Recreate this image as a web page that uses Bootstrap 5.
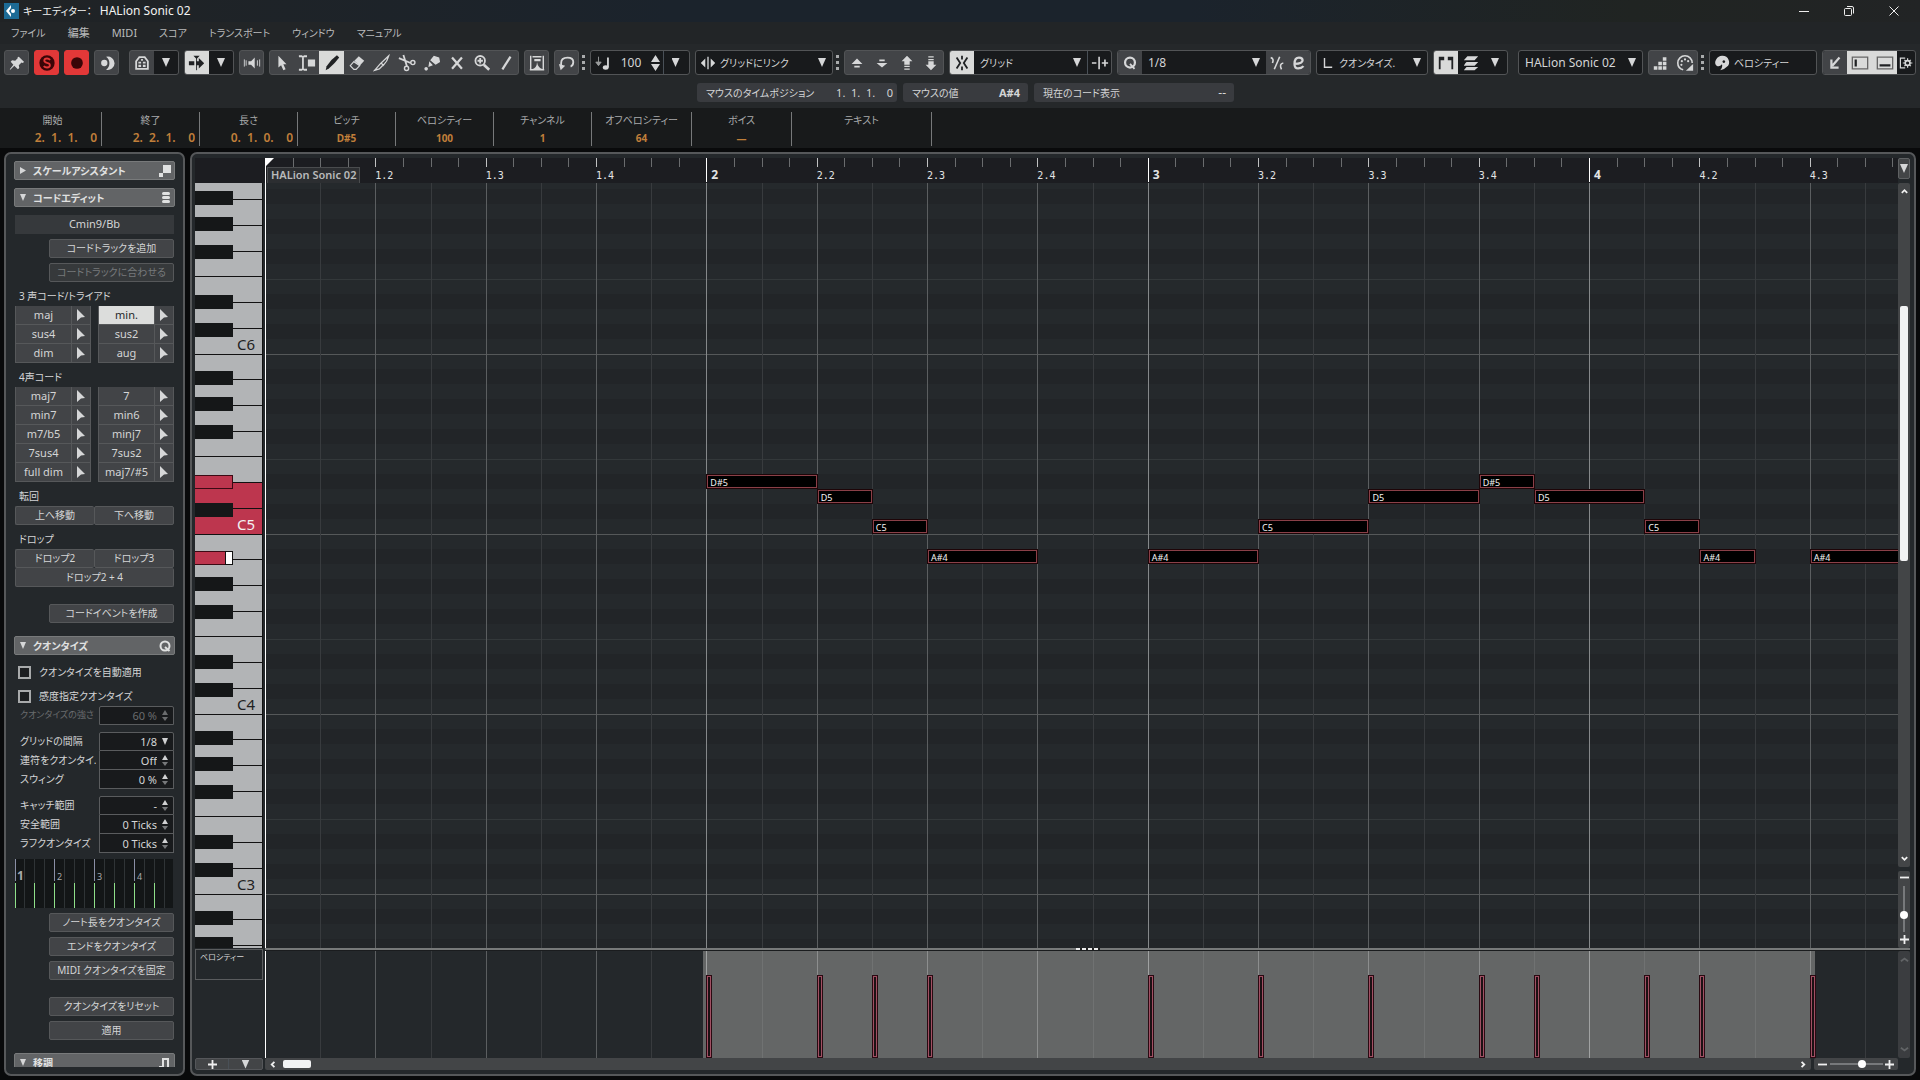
<!DOCTYPE html>
<html lang="ja" data-bs-theme="dark">
<head>
<meta charset="utf-8">
<meta name="viewport" content="width=device-width, initial-scale=1">
<title>キーエディター： HALion Sonic 02</title>
<link rel="stylesheet" href="https://cdn.jsdelivr.net/npm/bootstrap@5.3.0/dist/css/bootstrap.min.css">
<style>
:root{--ink:#d4d5d6;--field:#181a1c;--btn:#424447;--line:#5a5c5e;--panel:#24282b}
body{background:#090a0b;color:var(--ink);font-family:"Noto Sans","Noto Sans CJK JP",sans-serif;font-size:12px;line-height:16px;font-feature-settings:"palt"}
.jp{font-size:10px}
button,input,select{font:inherit;color:inherit;padding:0;margin:0;border:0;background:none;border-radius:0;min-width:0;font-feature-settings:inherit}
svg{display:block;flex:none}
.ic{width:18px;height:18px;fill:#d6d7d8;stroke:none}
.ln{fill:none;stroke:#d6d7d8;stroke-width:2}
.titlebar{height:22px;background:linear-gradient(90deg,#202325,#1b232c 35%,#1b232c 62%,#202422 85%,#222425);color:#f2f2f2}
.winbtns{gap:29px;padding-right:18px}
.menubar{height:22px;background:#222527;padding-left:11px;gap:22px;font-size:11px}
.menubar a{color:#b9babb;text-decoration:none}
.tools{background:#25282a;height:64px;padding-top:6px}
.toolrow{height:25px;padding:0 4px;gap:5px}
.grp{display:flex;height:25px;border:1px solid #525456;border-radius:3px;background:var(--btn);overflow:hidden;align-items:stretch;flex:none}
.grp>*{display:flex;align-items:center;justify-content:center}
.grp.fld,.grp .fld{background:var(--field)}
.grp .on{background:#d9dad9}
.grp .on .ic{fill:#202224}
.grp.red{background:#e23838;border-color:#e23838}
.grp .lit{background:var(--btn)}
.more{margin-left:5px}
.cell{width:25px;flex:none}
.grp>.cell:first-child,.grp>.cell:last-child{width:24px}
.solo{width:25px}.solo>button{width:100%}
.tri{width:8px;height:9px;background:#d6d7d8;clip-path:polygon(0 0,100% 0,50% 100%);flex:none}
.sel{position:relative;flex:1;min-width:0}
.sel select{appearance:none;width:100%;height:100%;padding:0 20px 0 6px;outline:0}
.sel .tri{position:absolute;right:6px;top:7px;pointer-events:none}
.dots{width:3px;height:15px;background:repeating-linear-gradient(#a9abac 0 3px,transparent 3px 6px);align-self:center;flex:none;margin-left:-2px}
.status{height:19px;gap:6px;margin-top:8px;padding-left:697px}
.status>div{background:#393b3f;border-radius:3px;height:19px;padding:0 4px 0 9px}
.info{height:40px;background:#181a1b;padding:4px 0 2px 4px}
.icell{border-right:1px solid #77797a;text-align:center;height:34px;flex:none}
.icell>*{display:block;height:17px;line-height:16px;color:#a9aaab}
.icell>input{width:100%;color:#c07f3a;font-size:10px;font-weight:700;text-align:center;line-height:18px}
.icell.tm>input{font-size:12px;font-weight:600;text-align:right;white-space:pre;padding-right:4px}
.w98{width:98px}.w100{width:100px}.w140{width:140px}
.main{padding:4px;gap:5px}
.pane{border:2px solid #56585a;border-radius:7px;background:var(--panel);min-height:0}
.side{width:181px;padding:7px 8px;flex:none}
.hd{width:100%;height:19px;flex:none;background:#626466;border:1px solid #787a7b;border-radius:2px;font-weight:700;color:#e0e1e1;padding:0 3px 0 5px;gap:7px}
.hd .tri{width:6px;height:7px}
.hd .tri.r{clip-path:polygon(0 0,100% 50%,0 100%)}
.b{height:19px;background:var(--btn);border:1px solid #56585a;border-radius:2px;width:125px;line-height:15px;flex:none}
.b:disabled{color:#77797b;background:#36393b}
.lbl{height:24px;padding:6px 0 0 5px;flex:none}
.blk{margin:0 1px;flex:none}
.chord{display:grid;grid-template-columns:57px 19px 7px 57px 19px;font-size:11px}
.chord button{height:19px;background:var(--btn);border:1px solid #56585a;border-left-width:0;border-top-width:0;line-height:15px;padding-bottom:2px;display:flex;align-items:center;justify-content:center}
.chord button.nm{border-left-width:1px}
.chord button.on{background:#dcdddc;color:#26282a}
.chord svg{width:10px;height:13px;fill:#d6d7d8}
.half>button{flex:1}
.q{display:grid;grid-template-columns:84px 75px}
.q label{padding-left:5px;height:19px;line-height:18px;white-space:nowrap}
.q .box{display:flex;align-items:center;gap:5px;height:19px;border:1px solid var(--line);border-top-width:0;background:var(--field);padding-right:5px;font-size:11px}
.q .box.t{border-top-width:1px;border-radius:2px 2px 0 0}
.q .box input,.q .box select{width:100%;text-align:right;text-align-last:right;appearance:none;outline:0;height:17px}
.q .dim,.q .dim input{color:#6a6c6e}
.q label.dim{font-size:9px}
.sp{width:6px;height:13px;fill:#d0d1d2}
.chk{height:24px;gap:8px;padding-left:3px;flex:none}
.chk input{appearance:none;width:13px;height:13px;border:2px solid #a8aaab;background:#1c1e20}
.ed{display:grid;grid-template:25px 1fr 3px 107px 12px / 70px 1fr 12px;padding:4px 4px 4px 3px;min-width:0}
.ruler{background:#1c1d21;position:relative;overflow:hidden}
.keys{position:relative;overflow:hidden;background:#b2b4b6;width:68px;border-right:1px solid #111}
.keys>*{position:absolute}
.wl{left:0;right:0;height:1px;background:#111}
.bk{left:0;width:38px;height:14px;background:#151718}
.rk{left:0;right:0;background:#bd364e}
.bk.red{background:#bd364e;border:1px solid #3c0a14;border-left:0}
.kn{right:7px;font-size:15px;line-height:18px;color:#222}
.roll{position:relative;overflow:hidden;background:#25292c}
.roll>*,.ruler>*,.lane>*{position:absolute}
.row-dark{left:0;right:0;height:15px;background:#222528}
.hl{left:0;right:0;height:1px}
.vl{top:0;bottom:0;width:1px}
.note{height:15px;border:1px solid #1d0508;background:#000;outline:1px solid #8a4048;outline-offset:-2px;color:#f4f4f4;font-size:9px;line-height:15px;padding-left:3px;overflow:hidden}
.lane{position:relative;overflow:hidden;background:#24282b}
.selband{top:0;bottom:0;background:#646666}
.vel{width:6px;background:#1c1114;border:1px solid #2a0a12;outline:1px solid #a05063;outline-offset:-2px}
.num{font-family:"DejaVu Sans Mono",monospace;font-size:10px;line-height:12px;top:12px;color:#e3e4e4}
.num.bar{font-family:"Noto Sans",sans-serif;font-weight:700;font-size:12px;top:11px}
.tick{top:0;width:1px;background:#6a6c6e;height:9px}
.part{left:2px;top:9px;height:16px;background:#2c2e31;border:1px solid #4a4c4e;border-bottom:0;font-size:11px;line-height:14px;font-weight:600;padding:0 3px;color:#b9babb}
.play{top:0;bottom:0;left:0;width:1px;background:#fff}
.flag{left:0;top:0;width:9px;height:9px;background:#fff;clip-path:polygon(0 0,100% 0,0 100%)}
.split{background:linear-gradient(#777979 0 2px,#1a1c1e 2px);position:relative;grid-column:2/4}
.grip{position:absolute;left:50%;top:0;width:24px;height:2px;margin-left:-12px;background:repeating-linear-gradient(90deg,#eee 0 4px,#222 4px 6px)}
.sb{background:#434547;border-radius:2px}
.rmenu{border:1px solid #5f6163}
.thumb{background:#f2f3f4;border-radius:2px}
.vthumb{position:absolute;left:2px;right:2px;top:123px;height:255px}
.hthumb{width:28px;height:8px;margin-left:5px}
.vbox{border:1px solid #5a5c5e;height:31px;width:68px;margin-top:-2px;font-size:8px;line-height:14px;padding-left:4px;background:#24282b;position:relative}
input[type=range]{appearance:none;height:10px;background:linear-gradient(#77797b,#77797b) center/100% 2px no-repeat}
input[type=range]::-webkit-slider-thumb{appearance:none;width:8px;height:8px;border-radius:50%;background:#fff}
.zoomv{width:46px;transform:rotate(90deg);flex:none}
.zoomvbox{height:46px;width:12px}
.zoomh{width:53px}
.mini{width:9px;height:9px;fill:none;stroke:#f0f0f0;stroke-width:2}
.mini.off{stroke:#77797b}
</style>
<script src="https://cdn.jsdelivr.net/npm/bootstrap@5.3.0/dist/js/bootstrap.bundle.min.js"></script>
</head>
<body class="vh-100 d-flex flex-column overflow-hidden">
<header class="titlebar d-flex align-items-center flex-shrink-0 ps-1">
  <svg width="15" height="16" viewBox="0 0 15 16"><rect width="15" height="16" fill="#1d6b96"/><path d="M7 2 2 8l5 6V11L5 8l2-3z" fill="#fff"/><circle cx="9" cy="8" r="2" fill="#fff"/></svg>
  <span class="ms-1 me-auto d-flex gap-2"><span class="jp">キーエディター：</span><span>HALion Sonic 02</span></span>
  <div class="winbtns d-flex">
    <button aria-label="最小化"><svg width="16" height="16" viewBox="0 0 16 16" stroke="#eee" fill="none"><path d="M3 8.5h10"/></svg></button>
    <button aria-label="元に戻す"><svg width="16" height="16" viewBox="0 0 16 16" stroke="#eee" fill="none"><rect x="3.5" y="5.5" width="7" height="7" rx="1"/><path d="M6 3.5h5q1.500 0 1.500 1.500v5.500"/></svg></button>
    <button aria-label="閉じる"><svg width="16" height="16" viewBox="0 0 16 16" stroke="#eee" fill="none"><path d="M3.500 3.500l9 9m0-9l-9 9"/></svg></button>
  </div>
</header>
<nav class="menubar d-flex align-items-center flex-shrink-0">
  <a class="jp" href="#">ファイル</a><a href="#">編集</a><a href="#">MIDI</a><a class="jp" href="#">スコア</a><a class="jp" href="#">トランスポート</a><a class="jp" href="#">ウィンドウ</a><a class="jp" href="#">マニュアル</a>
</nav>
<div class="tools flex-shrink-0">
  <div class="toolrow d-flex">
    <div class="grp solo"><button aria-label="ピン"><svg class="ic" viewBox="0 0 20 20"><path d="M12 3l6 6-2 1-1-.5-3 3 .5 3L11 17l-4-4-4.500 4.500-.500-.500L6 12 3 8.500 4.500 7l3.500.5 3-3L10.500 3.500z"/></svg></button></div>
    <div class="grp solo red"><button aria-label="ソロ"><svg class="ic" viewBox="0 0 20 20"><circle cx="10" cy="10" r="8.500" style="fill:#3a0507"/><path d="M13.500 6.500Q12 5 10 5 7 5 7 7.300q0 2 3 2.500 3.200.5 3.200 2.700Q13.200 15 10 15q-2.200 0-3.700-1.500" fill="none" stroke="#e23838" stroke-width="2"/></svg></button></div>
    <div class="grp solo red"><button aria-label="録音"><svg class="ic" viewBox="0 0 20 20"><circle cx="10" cy="10" r="6.500" style="fill:#3a0507"/></svg></button></div>
    <div class="grp solo"><button aria-label="レトロスペクティブ録音"><svg class="ic" viewBox="0 0 20 20"><path d="M9 3a7.500 7.500 0 1 1 0 14.500A9 9 0 0 0 9 3z"/><circle cx="7" cy="10" r="3.500"/></svg></button></div>
    <div class="grp more"><button class="cell" aria-label="表示"><svg class="ic" viewBox="0 0 20 20"><path class="ln" d="M3.500 16.500V8l3.500-4.500h6L16.500 8v8.500z"/><path d="M6 8.500h3v2H6zM11 8.500h3v2h-3zM6 12h3v2.500H6zM11 12h3v2.500h-3zM9 5.500h2v2H9z"/></svg></button><button class="cell fld" aria-label="表示メニュー"><i class="tri"></i></button></div>
    <div class="grp"><button class="cell on" aria-label="自動スクロール"><svg class="ic" viewBox="0 0 20 20"><path d="M1 8h6v4.500H1zM12 4.500l6 5.700-6 5.800v-3.500H9V8h3zM6 2h7L9.500 5.500z"/><path d="M9.500 4v14" stroke="#202224"/></svg></button><button class="cell fld" aria-label="自動スクロール設定"><i class="tri"></i></button></div>
    <div class="grp solo"><button aria-label="試聴"><svg class="ic" viewBox="0 0 20 20"><path d="M6 8h3l4-4v12l-4-4H6z"/><path d="M1.500 6v8M3.500 7v6M16 7v6M18.500 6v8" stroke="#d6d7d8"/></svg></button></div>
    <div class="grp">
      <button class="cell" aria-label="選択"><svg class="ic" viewBox="0 0 20 20"><path d="M6 2v13l3-2.500L11.500 18l2.500-1-2.500-5.500H15z"/></svg></button>
      <button class="cell" aria-label="トリム"><svg class="ic" viewBox="0 0 20 20"><path class="ln" d="M1 2.500h3l1.500 1 1.500-1h3M1 17.500h3l1.500-1 1.500 1h3M5.500 3v14"/><path d="M11 6h8v8h-8z"/></svg></button>
      <button class="cell on" aria-label="鉛筆"><svg class="ic" viewBox="0 0 20 20"><path d="M15.500 1.500l2.500 2.500Q13 11 6.500 16L3 18l1-4.500Q9 6 15.500 1.500z"/></svg></button>
      <button class="cell" aria-label="消しゴム"><svg class="ic" viewBox="0 0 20 20"><path d="M12 2.500l6 5-5 5.500-6-5.500z"/><path class="ln" d="M6.500 8.500L2.500 13l4 4H9l4-4z" style="stroke-width:1.300"/></svg></button>
      <button class="cell" aria-label="カット"><svg class="ic" viewBox="0 0 20 20"><path class="ln" d="M17.500 2L9 10l2.500 2.500Q16 8 17.500 2zM8.500 10.500L2 18l5-1.500 4-4" style="stroke-width:1.400"/></svg></button>
      <button class="cell" aria-label="はさみ"><svg class="ic" viewBox="0 0 20 20"><path class="ln" d="M1 4.500l13 5.500M6 1l4 13" style="stroke-width:2"/><circle class="ln" cx="9.500" cy="16" r="2.300" style="stroke-width:1.600"/><circle class="ln" cx="16.500" cy="9.500" r="2.300" style="stroke-width:1.600"/></svg></button>
      <button class="cell" aria-label="のり"><svg class="ic" viewBox="0 0 20 20"><path d="M12 2l6 2 1 5-5 3-6-5zM7 8l4 4.500-5 2z"/><circle cx="3.500" cy="16.500" r="2"/></svg></button>
      <button class="cell" aria-label="ミュート"><svg class="ic" viewBox="0 0 20 20"><path class="ln" d="M4.500 4l11 12.500m0-12.500l-11 12.500" style="stroke-width:2.500"/></svg></button>
      <button class="cell" aria-label="ズーム"><svg class="ic" viewBox="0 0 20 20"><circle class="ln" cx="8" cy="7.500" r="5.300"/><path class="ln" d="M8 4.500v6M5 7.500h6"/><path class="ln" d="M12 12l6 5.500" style="stroke-width:3"/></svg></button>
      <button class="cell" aria-label="ライン"><svg class="ic" viewBox="0 0 20 20"><path class="ln" d="M15 3L6 17" style="stroke-width:2.500"/></svg></button>
    </div>
    <div class="grp solo"><button aria-label="コントローラー"><svg class="ic" viewBox="0 0 20 20"><path class="ln" d="M3 2v15.500M17 2v15.500M2 17.500h16M5 3h10" style="stroke-width:1.600"/><path d="M7 5.500h7V8H7zM4 17q6-1 6-8 1 7 7 8z"/></svg></button></div>
    <div class="grp solo"><button aria-label="フィードバック"><svg class="ic" viewBox="0 0 20 20"><path class="ln" d="M3.500 15V10q0-6 7-6 6.500 0 6.500 5 0 4-3 5"/><path d="M1 11l2 7 5-5z"/></svg></button></div>
    <i class="dots"></i>
    <div class="grp fld" style="width:100px"><label class="cell" for="vel"><svg class="ic" viewBox="0 0 20 20"><path d="M5 3v8M2 9l3 4 3-4z" stroke="#9b9d9e" fill="#9b9d9e"/><path class="ln" d="M15.500 4v11"/><ellipse cx="13" cy="15" rx="3.200" ry="2.500"/></svg></label><input id="vel" class="text-center" style="width:32px" value="100"><button aria-label="増減" style="width:16px"><svg width="9" height="16" viewBox="0 0 9 16" fill="#d6d7d8"><path d="M0 7l4.500-7L9 7zM0 9h9l-4.500 7z"/></svg></button><button class="cell border-start" aria-label="ベロシティーメニュー"><i class="tri"></i></button></div>
    <div class="grp fld" style="width:138px"><span class="cell"><svg class="ic" viewBox="0 0 20 20"><path d="M7 5v10l-5-5zM13 5v10l5-5z"/><path d="M10 3v14" stroke="#d6d7d8" stroke-width="1.500"/></svg></span><div class="sel jp"><select aria-label="ノート長" class="ps-0"><option>グリッドにリンク</option></select><i class="tri"></i></div></div>
    <i class="dots"></i>
    <div class="grp">
      <button class="cell" aria-label="上へ"><svg class="ic" viewBox="0 0 20 20"><path d="M4 11l6-6 6 6zM7 13h6v2H7z"/></svg></button>
      <button class="cell" aria-label="下へ"><svg class="ic" viewBox="0 0 20 20"><path d="M4 10l6 5 6-5zM7 6h6v2H7z"/></svg></button>
      <button class="cell" aria-label="オクターブ上へ"><svg class="ic" viewBox="0 0 20 20"><path d="M4 8l6-6 6 6h-3v4H7V8zM7 13h6v1.500H7zM7 16h6v1.500H7z"/></svg></button>
      <button class="cell" aria-label="オクターブ下へ"><svg class="ic" viewBox="0 0 20 20"><path d="M4 12l6 6 6-6h-3V8H7v4zM7 5.500h6V7H7zM7 2.500h6V4H7z"/></svg></button>
    </div>
    <div class="grp fld" style="width:163px"><button class="cell on" aria-label="スナップ"><svg class="ic" viewBox="0 0 20 20"><path d="M10 2v4M10 14v4M4 4l4 6-4 6M16 4l-4 6 4 6" fill="none" stroke="#202224" stroke-width="2"/></svg></button><div class="sel jp"><select aria-label="スナップタイプ"><option>グリッド</option></select><i class="tri"></i></div><button class="cell border-start" aria-label="グリッド相対"><svg class="ic" viewBox="0 0 20 20"><path class="ln" d="M1 10h5M12 10h7M15.500 6v8M9 3v14" style="stroke-width:1.800"/></svg></button></div>
    <div class="grp fld" style="width:194px"><button class="cell lit" aria-label="クオンタイズ適用"><svg class="ic" viewBox="0 0 20 20"><circle class="ln" cx="10" cy="9.500" r="5.500" style="stroke-width:2.500"/><path class="ln" d="M10 11l5 5.500"/></svg></button><div class="sel"><select aria-label="クオンタイズ値"><option>1/8</option></select><i class="tri"></i></div><button class="lit" style="width:22px" aria-label="ソフトクオンタイズ"><svg class="ic" viewBox="0 0 20 20"><path class="ln" d="M13 3L7 17M3 4q4 1 2 6M17 10q-5 1-2 7" style="stroke-width:1.800"/></svg></button><button class="lit" style="width:22px" aria-label="クオンタイズパネル"><svg class="ic" viewBox="0 0 20 20"><path class="ln" d="M5 11q9 0 9-4 0-3-4-3-5 0-5 7 0 5 4 5 4 0 6-2.500" style="stroke-width:2.500"/></svg></button></div>
    <div class="grp fld" style="width:112px"><span class="ps-1"><svg class="ic" viewBox="0 0 20 20" style="width:14px"><path class="ln" d="M5 3v13h11"/></svg></span><div class="sel jp"><select aria-label="長さクオンタイズ" class="ps-1"><option>クオンタイズ.</option></select><i class="tri"></i></div></div>
    <div class="grp fld" style="width:75px"><button class="cell on" aria-label="パート境界"><svg class="ic" viewBox="0 0 20 20"><path d="M2 3h6v4H4v10H2zM12 3h6v14h-2V7h-4z"/></svg></button><button class="cell" aria-label="レイヤー"><svg class="ic" viewBox="0 0 20 20"><path d="M6 2.500h12L14 7H2zM5 9h13l-4 4H2l1.500-2.500zM5 14.500h13L14 18H2z"/></svg></button><button class="cell" aria-label="レイヤーメニュー"><i class="tri"></i></button></div>
    <div class="grp fld more" style="width:125px"><div class="sel"><select aria-label="編集パート"><option>HALion Sonic 02</option></select><i class="tri"></i></div></div>
    <div class="grp"><button class="cell" aria-label="ステップ入力"><svg class="ic" viewBox="0 0 20 20"><path d="M2 13.500h4v4H2zM7 13.500h4v4H7zM12 13.500h4v4h-4zM7 8.500h4v4H7zM12 8.500h4v4h-4zM12 3.500h4v4h-4z"/></svg></button><button class="cell" aria-label="MIDI入力"><svg class="ic" viewBox="0 0 20 20"><path class="ln" d="M8 17.500Q2 16 2 10a8 8 0 0 1 16 0" style="stroke-width:1.800"/><circle cx="10" cy="6" r="1.200"/><circle cx="6.500" cy="8" r="1.200"/><circle cx="13.500" cy="8" r="1.200"/><circle cx="6" cy="12" r="1.200"/><path d="M19 11v7.500h-8z"/></svg></button></div>
    <i class="dots"></i>
    <div class="grp fld" style="width:108px"><span class="cell"><svg class="ic" viewBox="0 0 20 20"><path fill-rule="evenodd" d="M10 2a7.500 7 0 0 1 5 12.500Q12 18 8 18q3-3 2-6.500Q7 15 4 13 1 10 3.500 6 6 2 10 2zM12 7a1.500 1.500 0 1 0 .1 0z"/></svg></span><div class="sel jp"><select aria-label="イベントカラー" class="ps-0 pe-0"><option>ベロシティー</option></select></div></div>
    <div class="grp fld" style="width:94px"><button class="cell lit" aria-label="ウィンドウ"><svg class="ic" viewBox="0 0 20 20"><path class="ln" d="M15 4L7 13M6 6v9h8" style="stroke-width:2.500"/></svg></button><button class="cell on" aria-label="左ゾーン"><svg class="ic" viewBox="0 0 20 20"><path d="M1.500 3.500h17v13h-17z" style="fill:none;stroke:#666;stroke-width:1.500"/><path d="M4 6h2.500v8H4z"/></svg></button><button class="cell on" aria-label="下ゾーン"><svg class="ic" viewBox="0 0 20 20"><path d="M1.500 3.500h17v13h-17z" style="fill:none;stroke:#666;stroke-width:1.500"/><path d="M4 11.500h12V14H4z"/></svg></button><button class="flex-fill" aria-label="設定"><svg class="ic" viewBox="0 0 20 20" style="width:16px"><path class="ln" d="M9 4H3v12h6" style="stroke-width:1.500"/><circle class="ln" cx="12" cy="10" r="3"/><path class="ln" d="M12 4v3M12 13v3M6 10h3M15 10h3M8 6l2 2M14 12l2 2M16 6l-2 2M10 12l-2 2" style="stroke-width:1.500"/></svg></button></div>
  </div>
  <div class="status d-flex">
    <div class="d-flex align-items-center justify-content-between" style="width:200px"><span class="jp">マウスのタイムポジション</span><span style="white-space:pre;font-size:11px">1.  1.  1.    0</span></div>
    <div class="d-flex align-items-center justify-content-between" style="width:139px;margin-right:-14px;width:125px;margin-right:0"><span class="jp">マウスの値</span><b class="pe-1" style="font-size:11px">A#4</b></div>
    <div class="d-flex align-items-center justify-content-between" style="width:200px"><span class="jp">現在のコード表示</span><span class="pe-1">--</span></div>
  </div>
</div>
<section class="info d-flex flex-shrink-0">
  <div class="icell tm w98"><label for="i1" class="jp">開始</label><input id="i1" value="2.  1.  1.    0"></div>
  <div class="icell tm w98"><label for="i2" class="jp">終了</label><input id="i2" value="2.  2.  1.    0"></div>
  <div class="icell tm w98"><label for="i3" class="jp">長さ</label><input id="i3" value="0.  1.  0.    0"></div>
  <div class="icell w98"><label for="i4" class="jp">ピッチ</label><input id="i4" value="D#5"></div>
  <div class="icell w98"><label for="i5" class="jp">ベロシティー</label><input id="i5" value="100"></div>
  <div class="icell w98"><label for="i6" class="jp">チャンネル</label><input id="i6" value="1"></div>
  <div class="icell w100"><label for="i7" class="jp">オフベロシティー</label><input id="i7" value="64"></div>
  <div class="icell w100"><label for="i8" class="jp">ボイス</label><input id="i8" value="—"></div>
  <div class="icell w140"><label for="i9" class="jp">テキスト</label><input id="i9" value=""></div>
</section>
<main class="main d-flex flex-grow-1 overflow-hidden">
  <aside class="pane side"><div class="h-100 overflow-hidden d-flex flex-column">
    <button class="hd d-flex align-items-center"><i class="tri r"></i><span class="jp me-auto">スケールアシスタント</span><svg width="12" height="12" viewBox="0 0 12 12" fill="#e0e1e1"><path d="M4 0h8v8H4zM0 8h4v4H0z"/></svg></button>
    <button class="hd d-flex align-items-center mt-2"><i class="tri"></i><span class="jp me-auto">コードエディット</span><svg width="10" height="12" viewBox="0 0 10 12" fill="#e0e1e1"><rect x="1" width="8" height="3" rx="1.500"/><rect x="1" y="4" width="8" height="3" rx="1.500"/><rect x="1" y="8" width="8" height="3" rx="1.500"/></svg></button>
    <div class="blk mt-2 text-center" style="height:19px;background:#36393c;line-height:18px;font-size:11px">Cmin9/Bb</div>
    <div class="blk d-flex flex-column align-items-end" style="gap:5px;padding-top:5px"><button class="b jp">コードトラックを追加</button><button class="b jp" disabled>コードトラックに合わせる</button></div>
    <div class="lbl jp">3 声コード/トライアド</div>
    <div class="chord blk" data-chords="maj,min.,sus4,sus2,dim,aug"></div>
    <div class="lbl jp">4声コード</div>
    <div class="chord blk" data-chords="maj7,7,min7,min6,m7/b5,minj7,7sus4,7sus2,full dim,maj7/#5"></div>
    <div class="lbl jp">転回</div>
    <div class="blk d-flex half"><button class="b jp border-end-0">上へ移動</button><button class="b jp">下へ移動</button></div>
    <div class="lbl jp">ドロップ</div>
    <div class="blk d-flex half"><button class="b jp border-end-0">ドロップ2</button><button class="b jp">ドロップ3</button></div>
    <div class="blk d-flex half"><button class="b jp border-top-0">ドロップ2 + 4</button></div>
    <div class="blk d-flex justify-content-end" style="padding:17px 0 13px"><button class="b jp">コードイベントを作成</button></div>
    <button class="hd d-flex align-items-center"><i class="tri"></i><span class="jp me-auto">クオンタイズ</span><svg width="12" height="12" viewBox="0 0 12 12" fill="none" stroke="#e0e1e1" stroke-width="2"><circle cx="6" cy="6" r="4.500"/><path d="M6 7l4.500 4"/></svg></button>
    <div class="chk blk d-flex align-items-center" style="margin-top:5px"><input type="checkbox" id="c1"><label for="c1" class="jp">クオンタイズを自動適用</label></div>
    <div class="chk blk d-flex align-items-center"><input type="checkbox" id="c2"><label for="c2" class="jp">感度指定クオンタイズ</label></div>
    <div class="q blk jp" style="margin-top:-2px"><label for="q0" class="dim">クオンタイズの強さ</label><div class="box t dim"><input id="q0" value="60 %" disabled><svg class="sp" viewBox="0 0 6 13" style="fill:#6a6c6e"><path d="M0 6l3-5 3 5zM0 8h6l-3 4z"/></svg></div></div>
    <div class="q blk jp" style="margin-top:7px">
      <label for="q1">グリッドの間隔</label><div class="box t"><select id="q1"><option>1/8</option></select><svg class="sp" viewBox="0 0 6 13"><path d="M0 3h6l-3 7z"/></svg></div>
      <label for="q2">連符をクオンタイ.</label><div class="box"><input id="q2" value="Off"><svg class="sp" viewBox="0 0 6 13"><path d="M0 6l3-5 3 5z"/><path d="M0 8h6l-3 4z" fill="#77797b"/></svg></div>
      <label for="q3">スウィング</label><div class="box"><input id="q3" value="0 %"><svg class="sp" viewBox="0 0 6 13"><path d="M0 6l3-5 3 5z"/><path d="M0 8h6l-3 4z" fill="#77797b"/></svg></div>
    </div>
    <div class="q blk jp" style="margin-top:7px">
      <label for="q4">キャッチ範囲</label><div class="box t"><input id="q4" value="-"><svg class="sp" viewBox="0 0 6 13"><path d="M0 6l3-5 3 5z"/><path d="M0 8h6l-3 4z" fill="#77797b"/></svg></div>
      <label for="q5">安全範囲</label><div class="box"><input id="q5" value="0 Ticks"><svg class="sp" viewBox="0 0 6 13"><path d="M0 6l3-5 3 5z"/><path d="M0 8h6l-3 4z" fill="#77797b"/></svg></div>
      <label for="q6">ラフクオンタイズ</label><div class="box"><input id="q6" value="0 Ticks"><svg class="sp" viewBox="0 0 6 13"><path d="M0 6l3-5 3 5z"/><path d="M0 8h6l-3 4z" fill="#77797b"/></svg></div>
    </div>
    <svg id="qviz" class="blk" width="158" height="49" style="margin-top:6px;background:#131617"></svg>
    <div class="blk d-flex flex-column align-items-end" style="gap:5px;padding-top:5px"><button class="b jp">ノート長をクオンタイズ</button><button class="b jp">エンドをクオンタイズ</button><button class="b jp">MIDI クオンタイズを固定</button></div>
    <div class="blk d-flex flex-column align-items-end" style="gap:5px;padding:17px 0 13px"><button class="b jp">クオンタイズをリセット</button><button class="b jp">適用</button></div>
    <button class="hd d-flex align-items-center"><i class="tri"></i><span class="jp me-auto">移調</span><svg width="12" height="12" viewBox="0 0 12 12" fill="none" stroke="#e0e1e1" stroke-width="2"><path d="M0 10h4V2h5v9h3"/></svg></button>
  </div></aside>

  <section class="pane ed flex-grow-1">
    <div style="background:#1c1d21"></div>
    <div class="ruler" id="ruler"></div>
    <button class="sb rmenu mb-1 d-flex align-items-center justify-content-center" aria-label="ルーラー"><i class="tri"></i></button>

    <div class="keys" id="keys"></div>
    <div class="roll" id="roll"></div>
    <div class="d-flex flex-column overflow-hidden" style="gap:4px">
      <div class="sb flex-grow-1 d-flex flex-column align-items-center justify-content-between position-relative">
        <svg class="mini mt-1" viewBox="0 0 10 10"><path d="M2 6.500l3-3 3 3"/></svg>
        <svg class="mini mb-1" viewBox="0 0 10 10"><path d="M2 3.500l3 3 3-3"/></svg>
        <div class="thumb vthumb"></div>
      </div>
      <div class="sb d-flex flex-column align-items-center justify-content-between pb-1" style="height:77px;padding-top:2px"><svg class="mini" viewBox="0 0 10 10"><path d="M0 5h10"/></svg><div class="zoomvbox d-flex align-items-center justify-content-center"><input class="zoomv" type="range" value="66" aria-label="縦ズーム"></div><svg class="mini" viewBox="0 0 10 10"><path d="M0 5h10M5 0v10"/></svg></div>
    </div>

    <div></div><div class="split"><i class="grip"></i></div>
    <div><div class="vbox">ベロシティー</div></div>
    <div class="lane" id="lane"></div>
    <div class="sb d-flex flex-column align-items-center justify-content-between py-1 opacity-75"><svg class="mini off" viewBox="0 0 10 10"><path d="M1 7l4-3 4 3"/></svg><svg class="mini off" viewBox="0 0 10 10"><path d="M1 3l4 3 4-3"/></svg></div>

    <div class="d-flex sb" style="width:68px;border:1px solid #55575a"><button class="w-50 d-flex align-items-center justify-content-center border-end" aria-label="レーン追加"><svg class="mini" viewBox="0 0 10 10"><path d="M0 5h10M5 0v10"/></svg></button><button class="w-50 d-flex align-items-center justify-content-center" aria-label="レーンメニュー"><i class="tri"></i></button></div>
    <div class="d-flex" style="gap:3px;grid-column:2/4;padding-right:12px">
      <div class="sb flex-grow-1 d-flex align-items-center px-1"><svg class="mini" viewBox="0 0 10 10"><path d="M6 2L3 5l3 3"/></svg><div class="thumb hthumb"></div><svg class="mini ms-auto" viewBox="0 0 10 10"><path d="M4 2l3 3-3 3"/></svg></div>
      <div class="sb d-flex align-items-center justify-content-between px-1" style="width:84px"><svg class="mini" viewBox="0 0 10 10"><path d="M0 5h10"/></svg><input class="zoomh" type="range" value="64" aria-label="横ズーム"><svg class="mini" viewBox="0 0 10 10"><path d="M0 5h10M5 0v10"/></svg></div>
    </div>
  </section>
</main>
<script>
// Geometry: 14.8 beats are visible, one semitone is 15px, C rows end at these heights.
const BEATS=14.8, SEMI=15, OCT=[171,351,531,711,891], $=id=>document.getElementById(id);
const pct=b=>(b/BEATS*100).toFixed(3)+'%';
function add(p,cls,st,txt){const e=document.createElement('div');e.className=cls;Object.assign(e.style,st||{});if(txt)e.textContent=txt;p.append(e);return e}
const names={C:0,D:2,'D#':3,'A#':10};
const notes=[[4,1,'D#5'],[5,.5,'D5'],[5.5,.5,'C5'],[6,1,'A#4'],[8,1,'A#4'],[9,1,'C5'],[10,1,'D5'],[11,.5,'D#5'],[11.5,1,'D5'],[12.5,.5,'C5'],[13,.5,'A#4'],[14,1,'A#4']];

// chord buttons
document.querySelectorAll('[data-chords]').forEach(g=>{g.dataset.chords.split(',').forEach((c,i)=>{
  const b=document.createElement('button');b.className='nm'+(c==='min.'?' on':'');b.textContent=c;
  const a=document.createElement('button');a.ariaLabel=c+' 適用';a.innerHTML='<svg viewBox="0 0 10 13"><path d="M1 1l8 8-4 .5L1 13z"/></svg>';
  g.append(b,a);if(i%2===0)g.append(document.createElement('span'));
})});

// ruler
const ruler=$('ruler');
for(let i=0;i<BEATS*4;i++){const bar=i%16===0;
  add(ruler,'tick',{left:pct(i/4),height:bar?'24px':'',background:bar?'#fff':i%4===0?'#c0c1c2':''});
  if(i%4===0&&i){const n=Math.floor(i/16)+1,k=i/4%4;
    const t=add(ruler,'num'+(k?'':' bar'),{left:pct(i/4)},k?n+'.'+(k+1):n);if(!k)t.style.marginLeft='5px'}}
add(ruler,'part',{},'HALion Sonic 02');add(ruler,'play');add(ruler,'flag');

// keyboard
const keys=$('keys');
OCT.forEach((y,i)=>{
  if(i===1)add(keys,'rk',{top:y-52+'px',height:'52px'});
  [0,26,52,78,103,129,155].forEach(d=>add(keys,'wl',{top:y-d+'px'}));
  [31,59,109,137,163].forEach((d,k)=>{const red=(i===1&&k===1)||(i===2&&k===4);
    add(keys,'bk'+(red?' red':''),{top:y-d+'px'});
    if(i===2&&k===4)add(keys,'bk',{top:y-d+'px',left:'30px',width:'8px',background:'#fff',border:'1px solid #111'})});
  if(i<4)add(keys,'kn',{top:y-19+'px',color:i===1?'#f2f2f2':''},'C'+(6-i));
});
[129,155].forEach(d=>add(keys,'wl',{top:1071-d+'px'}));
[137,163].forEach(d=>add(keys,'bk',{top:1071-d+'px'}));

// piano roll and velocity lane
const roll=$('roll'),lane=$('lane');
[...OCT,1071].forEach(y=>[1,3,6,8,10].forEach(s=>add(roll,'row-dark',{top:y-SEMI*(s+1)+'px'})));
[...OCT,1071].forEach(y=>{add(roll,'hl',{top:y+'px',background:'#555859'});add(roll,'hl',{top:y-75+'px',background:'#33383a'})});
add(lane,'selband',{left:pct(3.97),width:pct(10.08)});
for(let i=1;i<BEATS*2;i++){
  const c=i%8===0?'#85888a':i%2===0?'#5b5e60':'#383b3e';
  add(roll,'vl',{left:pct(i/2),background:c});
  const inSel=i>=8&&i<=28;
  add(lane,'vl',{left:pct(i/2),background:inSel?(i%8===0?'#a0a2a2':i%2===0?'#8c8e8e':'#707272'):c});
}
notes.forEach(([s,l,n])=>{
  const o=+n.slice(-1),y=OCT[6-o]-SEMI*(names[n.slice(0,-1)]+1);
  add(roll,'note',{left:pct(s),width:`calc(${pct(l)} + 1px)`,top:y+'px'},n);
  add(lane,'vel',{left:pct(s),top:'24px',bottom:'0'});
});
add(roll,'play');add(lane,'play');

// quantize preview
let s='';
for(let i=0;i<16;i++){const x=i?i*10-.5:.5;s+=`<path d="M${x} 0V${i%4?49:22}" stroke="${i%4?'#2f3436':'#8a8fa5'}"/>`;if(i%2===0)s+=`<path d="M${x} 24V49" stroke="#8fe08a"/>`}
[1,2,3,4].forEach((n,i)=>s+=`<text x="${i*40+2}" y="21" font-size="${i?9:12}" font-weight="${i?400:700}" fill="#a9abad">${n}</text>`);
$('qviz').innerHTML=s;
</script>
</body>
</html>
